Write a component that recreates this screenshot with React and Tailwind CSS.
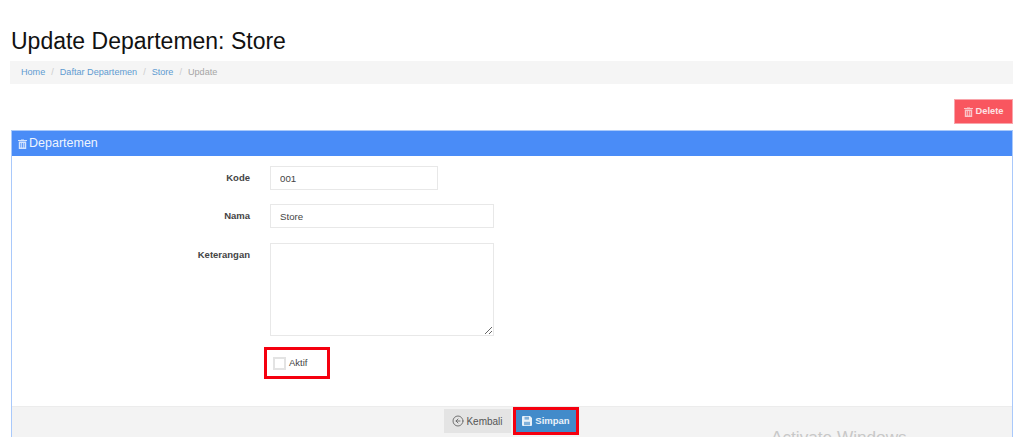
import { ArrowLeftCircle } from "lucide-react";

const SaveIcon = () => (
  <svg width="10" height="10" viewBox="0 0 10 10" className="mr-[3px] shrink-0">
    <path d="M0 1a1 1 0 0 1 1-1h7l2 2v7a1 1 0 0 1-1 1H1a1 1 0 0 1-1-1z" fill="#e8f1f8" />
    <rect x="2.5" y="0.8" width="4.5" height="2.8" fill="#7fb0da" />
    <rect x="2" y="5.8" width="6" height="3.4" fill="#7fb0da" />
  </svg>
);

const TrashIcon = ({ color, size = 9 }) => (
  <svg width={size} height={size + 1} viewBox="0 0 9 10" className="shrink-0">
    <path d="M3 1V.4h3V1h3v1H0V1z" fill={color} />
    <path d="M.8 2.6h7.4V10H.8zM2.4 4v4.6h.8V4zm1.7 0v4.6h.8V4zm1.7 0v4.6h.8V4z" fill={color} fillRule="evenodd" />
  </svg>
);

function FormRow({ label, children, className = "" }) {
  return (
    <div className={`flex items-start ${className}`}>
      <label className="w-[238px] shrink-0 pt-[6px] text-right text-[9.5px] leading-[12px] font-bold text-[#444]">
        {label}
      </label>
      <div className="ml-[20px]">{children}</div>
    </div>
  );
}

export default function App() {
  return (
    <div className="relative h-[437px] overflow-hidden bg-white px-[11px] font-['Liberation_Sans',Arial,sans-serif] text-[#333]">
      <h1 className="pt-[28px] text-[23px] leading-[26px] font-normal text-[#111]">Update Departemen: Store</h1>

      <nav className="mt-[7px] -ml-[1px] flex h-[23px] items-center gap-[6px] bg-[#f5f5f5] pl-[11px] text-[9.1px] text-[#a5a5a5]">
        <a className="text-[#5f9bd1]">Home</a>
        <span className="text-[#ccc]">/</span>
        <a className="text-[#5f9bd1]">Daftar Departemen</a>
        <span className="text-[#ccc]">/</span>
        <a className="text-[#5f9bd1]">Store</a>
        <span className="text-[#ccc]">/</span>
        <span>Update</span>
      </nav>

      <div className="mt-[15px] flex justify-end">
        <button className="flex h-[25px] w-[59px] items-center justify-center gap-[3px] border border-[#f9a5ab] bg-[#f9565f] text-[9.3px] font-bold text-[#fde3e4]">
          <TrashIcon color="#fbc5c9" />
          Delete
        </button>
      </div>

      <div className="mt-[6px] border border-[#a9c9fb]">
        <div className="flex h-[25px] items-center gap-[2px] bg-[#4a8cf7] pl-[6px] text-[12.5px] text-[#eef4fe]">
          <TrashIcon color="#d5e4fd" />
          Departemen
        </div>

        <div className="h-[250px] pt-[10px] text-[10px]">
          <FormRow label="Kode">
            <input
              readOnly
              value="001"
              className="block h-[24px] w-[168px] border border-[#e8e8e8] bg-white px-[9px] text-[9.7px] text-[#444] outline-none"
            />
          </FormRow>
          <FormRow label="Nama" className="mt-[14px]">
            <input
              readOnly
              value="Store"
              className="block h-[24px] w-[224px] border border-[#e8e8e8] bg-white px-[9px] text-[9.7px] text-[#444] outline-none"
            />
          </FormRow>
          <FormRow label="Keterangan" className="mt-[15px]">
            <textarea
              readOnly
              className="block h-[93px] w-[224px] border border-[#e8e8e8] bg-white outline-none"
            />
          </FormRow>

          <div className="mt-[11px] ml-[252px] flex h-[32px] w-[66px] items-center border-[3px] border-[#f5000f] pl-[6px]">
            <span className="h-[13px] w-[13px] border-2 border-[#e3e3e3] bg-white" />
            <span className="ml-[3px] text-[9.5px] text-[#444]">Aktif</span>
          </div>
        </div>

        <div className="flex h-[40px] justify-center gap-[2px] border-t border-[#ececec] bg-[#f3f3f3] pt-[2px] pr-[1px]">
          <button className="flex h-[24px] w-[67px] items-center justify-center gap-[2px] bg-[#e4e4e4] text-[10px] text-[#555]">
            <ArrowLeftCircle size={12} strokeWidth={1.8} className="text-[#666]" />
            Kembali
          </button>
          <button className="-mt-[2px] flex h-[28px] w-[66px] items-center justify-center border-[3px] border-[#f5000f] bg-[#428bca] text-[9.5px] font-bold text-[#eaf2f9]">
            <SaveIcon />
            Simpan
          </button>
        </div>
      </div>

      <div className="absolute top-[427px] left-[771px] text-[17.2px] leading-[20px] text-[#c8c8c8]">Activate Windows</div>
    </div>
  );
}
